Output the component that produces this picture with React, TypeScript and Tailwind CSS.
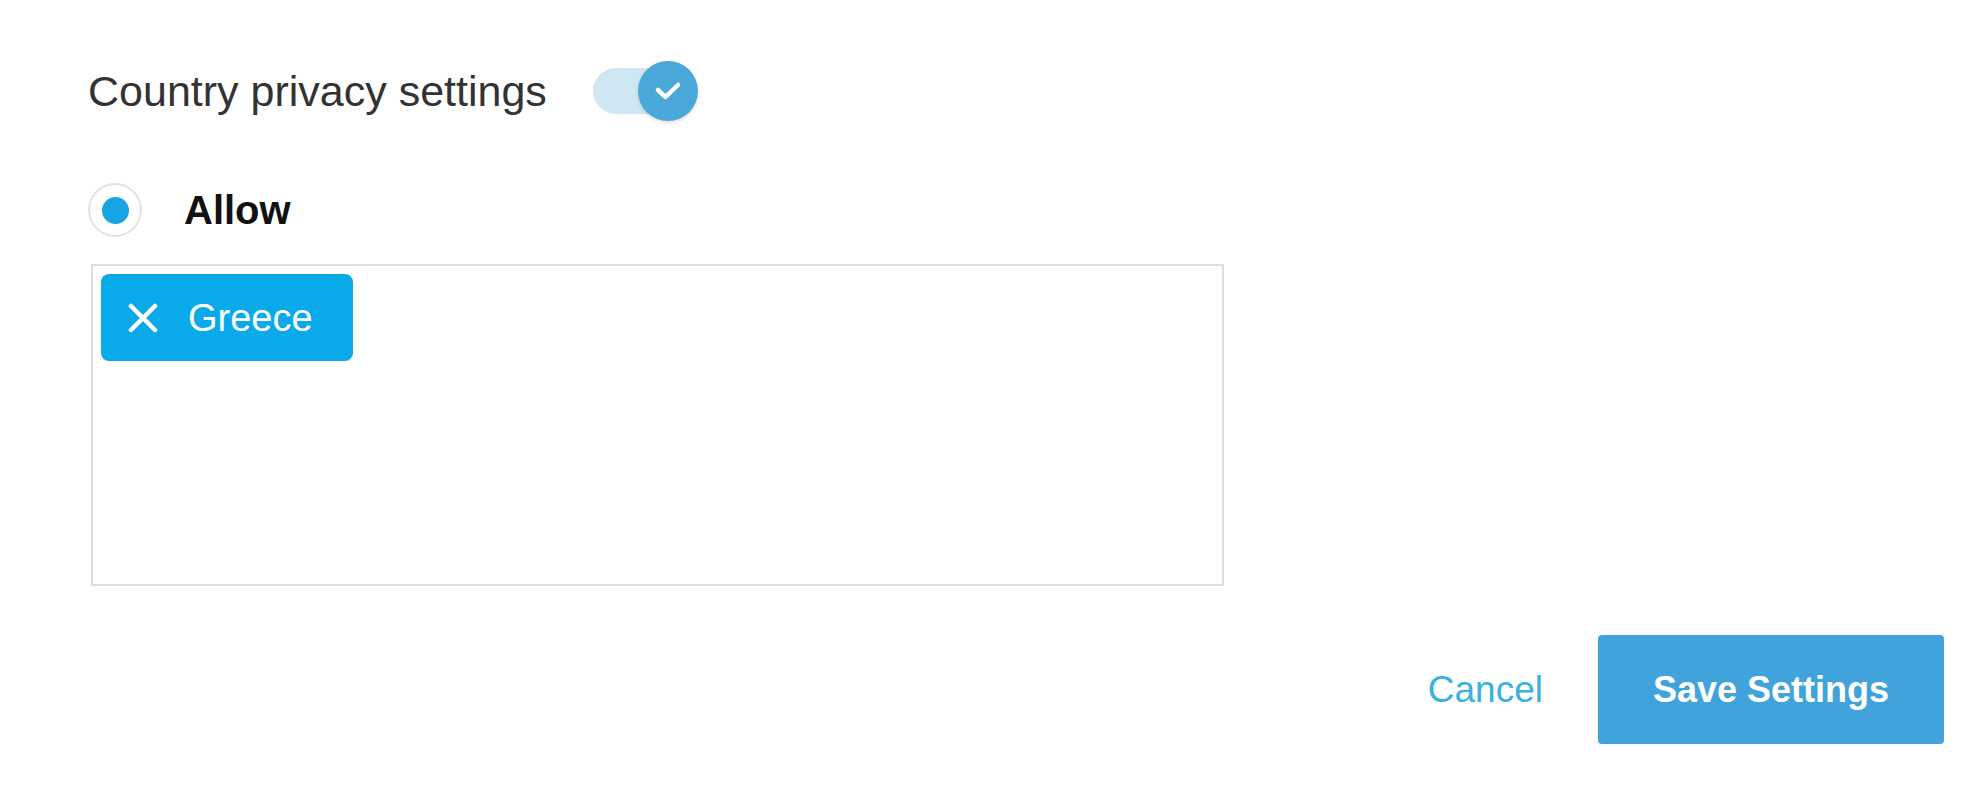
import { useState } from "react";

const font = { fontFamily: '"Liberation Sans", Arial, sans-serif' };

function Toggle({ on }: { on: boolean }) {
  return (
    <div className="relative h-[60px] w-[106px]">
      <div className="absolute left-0 top-[7px] h-[46px] w-[92px] rounded-full bg-[#cfe6f3]" />
      <div className="absolute left-[45px] top-0 flex h-[60px] w-[60px] items-center justify-center rounded-full bg-[#4aa8d9] shadow-[0_2px_4px_rgba(0,0,0,0.12)]">
        {on && (
          <svg width="28" height="20" viewBox="0 0 28 20" fill="none">
            <path d="M4 9 L11.5 16 L24 4" stroke="white" strokeWidth="4.5" strokeLinecap="round" strokeLinejoin="round" />
          </svg>
        )}
      </div>
    </div>
  );
}

function Radio({ checked }: { checked: boolean }) {
  return (
    <div className="flex h-[54px] w-[54px] items-center justify-center rounded-full border-2 border-[#e2e2e2] bg-white">
      {checked && <div className="h-[27px] w-[27px] rounded-full bg-[#17a4e4]" />}
    </div>
  );
}

function Chip({ label, onRemove }: { label: string; onRemove: () => void }) {
  return (
    <button
      onClick={onRemove}
      className="flex h-[87px] w-[252px] items-center rounded-[8px] bg-[#0aaaea] pl-[27px] text-[38px] text-white"
    >
      <svg width="30" height="30" viewBox="0 0 30 30" className="mr-[30px]">
        <path d="M3 3 L27 27 M27 3 L3 27" stroke="white" strokeWidth="4.5" strokeLinecap="round" />
      </svg>
      <span className="leading-none">{label}</span>
    </button>
  );
}

export default function App() {
  const [countries, setCountries] = useState(["Greece"]);

  return (
    <div className="min-h-[787px] w-full bg-white" style={font}>
      <div className="pl-[88px] pt-[61px]">
        <div className="flex h-[60px] items-center">
          <span className="text-[43px] leading-none text-[#333333]">Country privacy settings</span>
          <div className="ml-[46px]">
            <Toggle on />
          </div>
        </div>

        <div className="mt-[62px] flex items-center">
          <Radio checked />
          <span className="ml-[42px] text-[40px] font-bold leading-none text-[#111111]">Allow</span>
        </div>

        <div className="ml-[3px] mt-[27px] h-[322px] w-[1133px] border-2 border-[#dedede] p-[8px]">
          <div className="flex flex-wrap gap-2">
            {countries.map((c) => (
              <Chip key={c} label={c} onRemove={() => setCountries(countries.filter((x) => x !== c))} />
            ))}
          </div>
        </div>
      </div>

      <div className="mt-[49px] flex items-center justify-end pr-[29px]">
        <button className="mr-[55px] text-[37px] text-[#39b1e2]">Cancel</button>
        <button className="flex h-[109px] w-[346px] items-center justify-center rounded-[4px] bg-[#40a3dc] text-[36px] font-bold text-white">
          Save Settings
        </button>
      </div>
    </div>
  );
}
